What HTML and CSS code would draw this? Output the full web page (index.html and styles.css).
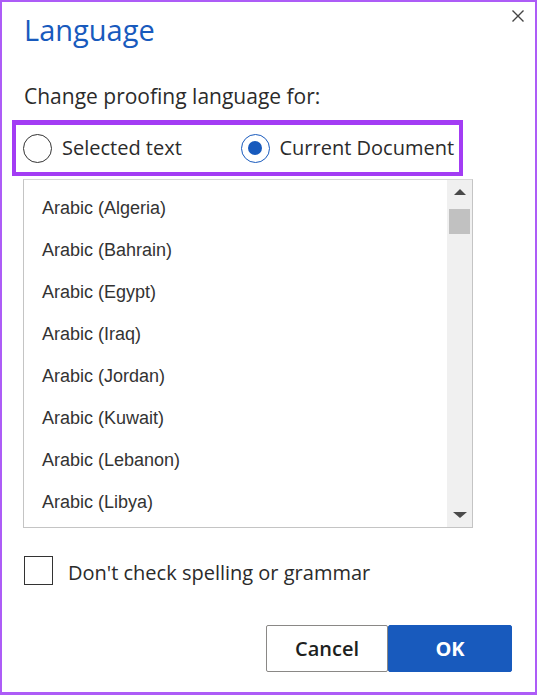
FILE: index.html
```html
<!DOCTYPE html>
<html lang="en">
<head>
<meta charset="utf-8">
<title>Language</title>
<link rel="stylesheet" href="styles.css">
</head>
<body>
<div class="dialog">
  <button class="close" aria-label="Close">
    <svg width="12" height="12" viewBox="0 0 12 12"><path d="M0.5 0.5 L11.5 11.5 M11.5 0.5 L0.5 11.5" stroke="#444" stroke-width="1.4" fill="none"/></svg>
  </button>
  <h1 class="title">Language</h1>
  <p class="prompt">Change proofing language for:</p>
  <div class="scope">
    <label class="option"><span class="radio"></span><span class="option-text">Selected text</span></label>
    <label class="option"><span class="radio checked"></span><span class="option-text">Current Document</span></label>
  </div>
  <div class="listbox">
    <ul class="items">
      <li>Arabic (Algeria)</li>
      <li>Arabic (Bahrain)</li>
      <li>Arabic (Egypt)</li>
      <li>Arabic (Iraq)</li>
      <li>Arabic (Jordan)</li>
      <li>Arabic (Kuwait)</li>
      <li>Arabic (Lebanon)</li>
      <li>Arabic (Libya)</li>
    </ul>
    <div class="scrollbar">
      <div class="arrow-btn up"><span class="tri-up"></span></div>
      <div class="thumb"></div>
      <div class="track"></div>
      <div class="arrow-btn down"><span class="tri-down"></span></div>
    </div>
  </div>
  <label class="check"><span class="box"></span><span class="check-text">Don't check spelling or grammar</span></label>
  <div class="actions">
    <button class="btn cancel">Cancel</button>
    <button class="btn ok">OK</button>
  </div>
</div>
</body>
</html>
```

FILE: styles.css
```css
* { box-sizing: border-box; }
html, body { margin: 0; padding: 0; background: #fff; }
body { width: 537px; height: 695px; overflow: hidden; font-family: "Open Sans", "Noto Sans", sans-serif; color: #2b2b2b; }

.dialog {
  position: relative;
  width: 537px;
  height: 695px;
  border: 2px solid #ad5cf7;
  border-bottom-width: 3px;
  padding: 0 23px 0 22px;
  display: flex;
  flex-direction: column;
  background: #fff;
}

.close {
  position: absolute;
  top: 8px;
  right: 11px;
  width: 12px;
  height: 12px;
  padding: 0;
  border: 0;
  background: none;
  display: flex;
}

.title {
  margin: 7.5px 0 0 0;
  font-size: 29px;
  line-height: 40px;
  font-weight: 500;
  color: #185abd;
}

.prompt {
  margin: 32.3px 0 0 0;
  font-size: 21px;
  line-height: 28px;
  font-weight: 500;
  color: #2b2b2b;
}

.scope {
  margin: 9.8px 0 0 -12px;
  width: 451px;
  height: 56px;
  border: 4px solid #a33cf4;
  border-top-width: 5px;
  padding-left: 7px;
  display: grid;
  grid-template-columns: 217.5px auto;
  align-items: center;
}

.option {
  display: flex;
  align-items: center;
  gap: 10px;
}

.radio {
  width: 29px;
  height: 29px;
  border-radius: 50%;
  border: 1.5px solid #333;
  display: flex;
  align-items: center;
  justify-content: center;
  flex: none;
}
.radio.checked { border: 1px solid #185abd; }
.radio.checked::after {
  content: "";
  width: 14px;
  height: 14px;
  border-radius: 50%;
  background: #185abd;
}

.option-text {
  font-size: 20px;
  line-height: 28px;
  color: #2b2b2b;
}

.listbox {
  margin: 3px 0 0 -1px;
  width: 450px;
  height: 349px;
  border: 1px solid #c4c4c4;
  border-top-color: #d6d6d6;
  display: flex;
}

.items {
  list-style: none;
  margin: 0;
  padding: 7px 0 0 18px;
  flex: 1;
  font-family: "Liberation Sans", Arial, sans-serif;
  font-size: 18px;
  color: #333;
}
.items li { line-height: 42px; height: 42px; }

.scrollbar {
  width: 25px;
  background: #f0f0f0;
  display: flex;
  flex-direction: column;
  align-items: center;
}
.arrow-btn {
  width: 25px;
  height: 25px;
  display: flex;
  align-items: center;
  justify-content: center;
  flex: none;
}
.arrow-btn.down { height: 24px; }
.tri-up {
  width: 0; height: 0;
  border-left: 6.5px solid transparent;
  border-right: 6.5px solid transparent;
  border-bottom: 6px solid #4a4a4a;
}
.tri-down {
  width: 0; height: 0;
  border-left: 7px solid transparent;
  border-right: 7px solid transparent;
  border-top: 6px solid #4a4a4a;
}
.thumb {
  margin-top: 4px;
  width: 21px;
  height: 25px;
  background: #c1c1c1;
  flex: none;
}
.track { flex: 1; }

.check {
  margin-top: 28px;
  height: 29px;
  display: flex;
  align-items: center;
  gap: 15px;
}
.box {
  width: 29px;
  height: 29px;
  border: 1.5px solid #333;
  flex: none;
}
.check-text {
  font-size: 20px;
  line-height: 22px;
  padding-top: 6px;
  color: #2b2b2b;
}

.actions {
  margin-top: 40px;
  display: flex;
  justify-content: flex-end;
}
.btn {
  height: 47px;
  font-family: "Open Sans", "Noto Sans", sans-serif;
  font-size: 20px;
  font-weight: 600;
  border-radius: 2px;
  padding: 0;
}
.cancel {
  width: 122px;
  background: #fff;
  border: 1px solid #8a8886;
  color: #201f1e;
}
.ok {
  width: 124px;
  background: #185abd;
  border: 1px solid #185abd;
  color: #fff;
  font-weight: 700;
}
```
